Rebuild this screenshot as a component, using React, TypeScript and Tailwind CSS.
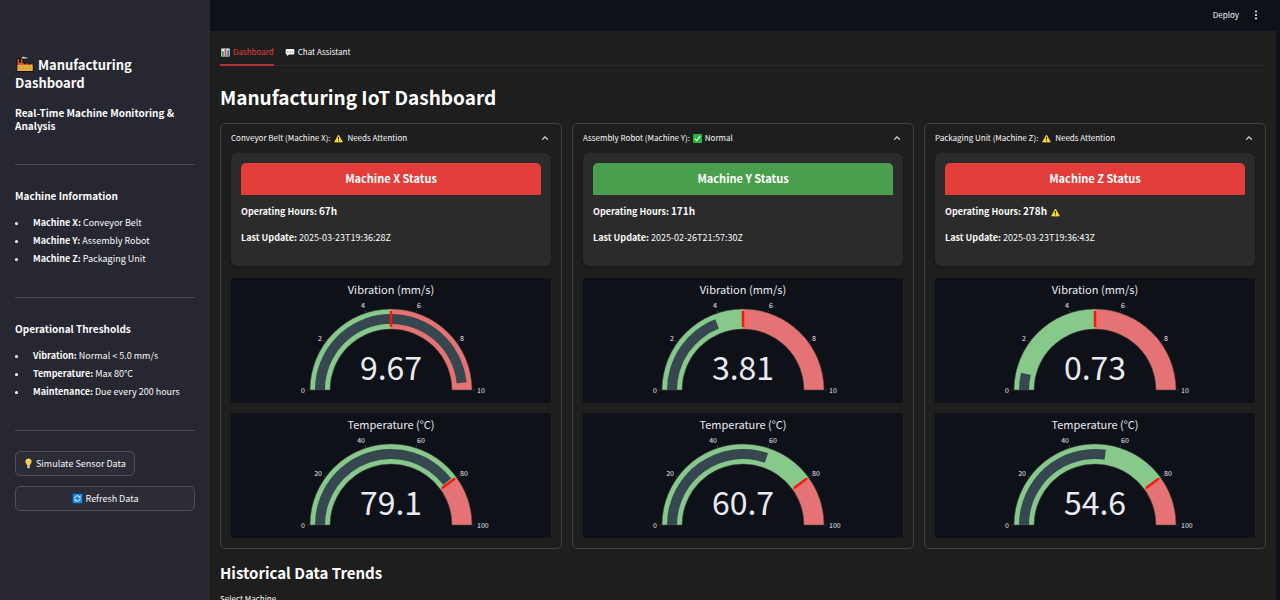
import type { ReactNode } from "react";

type Machine = {
  id: string;
  name: string;
  ok: boolean;
  hours: number;
  maintenanceDue: boolean;
  updated: string;
  vibration: number;
  temperature: number;
};

const machines: Machine[] = [
  { id: "X", name: "Conveyor Belt", ok: false, hours: 67, maintenanceDue: false, updated: "2025-03-23T19:36:28Z", vibration: 9.67, temperature: 79.1 },
  { id: "Y", name: "Assembly Robot", ok: true, hours: 171, maintenanceDue: false, updated: "2025-02-26T21:57:30Z", vibration: 3.81, temperature: 60.7 },
  { id: "Z", name: "Packaging Unit", ok: false, hours: 278, maintenanceDue: true, updated: "2025-03-23T19:36:43Z", vibration: 0.73, temperature: 54.6 },
];

/* ---------- Icons ---------- */

function FactoryIcon() {
  return (
    <svg viewBox="0 0 18 16" className="mx-px inline-block h-4 w-[18px] align-[-2px]" aria-hidden="true">
      <path d="M1 15.5V2.500h2.400v4h1V2.500h2.400v4l3 1.500V5.800l3.400 2.400 3.800-1.900v9.200z" fill="#e8542a" stroke="#111" strokeWidth="1" />
      <path d="M1.500 9h15.200V15H1.500z" fill="#f3a92c" />
      <path d="M3 11h1.800v1.500H3zm3.300 0h1.800v1.500H6.300zm3.300 0h1.800v1.500H9.600zm3.300 0h1.800v1.500h-1.800z" fill="#7fb7a0" />
      <path d="M5.500 1.900C6 .4 8.300.2 9.200 1.100c1.200-.4 2.800.3 2.800 1.700H7.200C6.300 2.900 5.300 2.600 5.500 1.900z" fill="#e6e6e6" stroke="#111" strokeWidth=".6" />
    </svg>
  );
}

function ChartIcon() {
  return (
    <svg viewBox="0 0 9 9" className="h-[9px] w-[9px]" aria-hidden="true">
      <rect x=".3" y=".5" width="8.400" height="8" fill="#e9eef2" />
      <rect x="1" y="3.200" width="1.800" height="5" fill="#2faa4d" />
      <rect x="3.600" y="1.200" width="1.800" height="7" fill="#d9453c" />
      <rect x="6.200" y="2.200" width="1.800" height="6" fill="#2f82c9" />
    </svg>
  );
}

function ChatIcon() {
  return (
    <svg viewBox="0 0 10 9" className="h-[9px] w-[10px]" aria-hidden="true">
      <path d="M1.500 1h7a.8.8 0 0 1 .8.8v4a.8.8 0 0 1-.8.8H4L2.200 8.200V6.600h-.7a.8.8 0 0 1-.8-.8v-4A.8.8 0 0 1 1.500 1z" fill="#f2f2f2" />
      <path d="M2.400 3.500h1v.9h-1zm2.100 0h1v.9h-1zm2.100 0h1v.9h-1z" fill="#777" />
    </svg>
  );
}

function WarningIcon() {
  return (
    <svg viewBox="0 0 9 9" className="mr-1 ml-[2px] inline-block h-[9px] w-[9px] align-[-2px]" role="img" aria-label="Warning">
      <path d="M4.500 1 8.400 8H.6z" fill="#fbdc2e" stroke="#fbdc2e" strokeWidth=".7" strokeLinejoin="round" />
      <path d="M4.500 3v2.600M4.500 6.300v1" stroke="#26220a" strokeWidth="1" />
    </svg>
  );
}

function CheckIcon() {
  return (
    <svg viewBox="0 0 9 9" className="mr-[3px] ml-px inline-block h-[9px] w-[9px] align-[-2px]" role="img" aria-label="OK">
      <rect width="9" height="9" rx=".8" fill="#27b53a" />
      <path d="m2 4.800 1.800 1.900L7.200 2" fill="none" stroke="#fff" strokeWidth="1.100" />
    </svg>
  );
}

function BulbIcon() {
  return (
    <svg viewBox="0 0 9 11" className="h-[11px] w-[9px]" aria-hidden="true">
      <path d="M4.500.6a3.100 3.100 0 0 1 3.100 3.100c0 1.700-1.500 2.200-1.700 4H3.100c-.2-1.800-1.700-2.300-1.700-4A3.100 3.100 0 0 1 4.500.6z" fill="#fbc94b" />
      <path d="M3.500 2.200c.5-.6 1-.8 1.600-.8" stroke="#fff1b8" strokeWidth=".8" fill="none" />
      <path d="M3.200 7.800h2.600v1.400l-.7 1H3.900l-.7-1z" fill="#c9c9c9" />
    </svg>
  );
}

function RefreshIcon() {
  return (
    <svg viewBox="0 0 11 11" className="h-[11px] w-[11px]" aria-hidden="true">
      <rect x=".4" y=".4" width="10.200" height="10.200" rx="1" fill="#1788e0" stroke="#0b3a66" strokeWidth=".8" />
      <path d="M2.800 5.500a2.700 2.700 0 0 1 4.700-1.800M8.200 5.500a2.700 2.700 0 0 1-4.700 1.800" fill="none" stroke="#fff" strokeWidth="1" />
      <path d="M8.500 2.300v2.300H6.200zM2.500 8.700V6.400h2.300z" fill="#fff" />
    </svg>
  );
}

function ChevronUp() {
  return (
    <svg viewBox="0 0 8 6" className="h-[6px] w-2" aria-hidden="true">
      <path d="m1.200 4.600 2.800-2.800 2.800 2.800" fill="none" stroke="#e4e4e4" strokeWidth="1.200" />
    </svg>
  );
}

/* ---------- Gauge ---------- */

const CX = 160;
const CY = 112;

function point(r: number, t: number) {
  const a = Math.PI * (1 - t);
  return `${(CX + r * Math.cos(a)).toFixed(2)} ${(CY - r * Math.sin(a)).toFixed(2)}`;
}

function band(r0: number, r1: number, from: number, to: number) {
  return `M${point(r1, from)}A${r1} ${r1} 0 0 1 ${point(r1, to)}L${point(r0, to)}A${r0} ${r0} 0 0 0 ${point(r0, from)}Z`;
}

const tickSpots: { x: number; y: number; anchor: "start" | "end" }[] = [
  { x: 74, y: 115, anchor: "end" },
  { x: 91, y: 63, anchor: "end" },
  { x: 134, y: 30, anchor: "end" },
  { x: 186, y: 30, anchor: "start" },
  { x: 229, y: 63, anchor: "start" },
  { x: 246, y: 115, anchor: "start" },
];

function Gauge({ title, value, max, limit }: { title: string; value: number; max: number; limit: number }) {
  const t = value / max;
  const l = limit / max;
  return (
    <svg viewBox="0 0 320 125" className="block h-[125px] w-full bg-[#0e1117]" role="img" aria-label={`${title}: ${value}`}>
      <g fill="#e9ebf1" textAnchor="middle">
        <text x={CX} y="16" fontSize="11">{title}</text>
        <text x={CX} y="102" fontSize="32">{value}</text>
      </g>
      <path d={band(61, 81, 0, l)} fill="#86c98a" />
      <path d={band(61, 81, l, 1)} fill="#e57373" />
      <path d={band(66, 76, 0, t)} fill="#37474f" />
      <path d={band(61, 81, 0, 1)} fill="none" stroke="#444" strokeWidth=".5" />
      <path d={`M${point(63, l)}L${point(79, l)}`} stroke="#f5180f" strokeWidth="2.500" />
      {tickSpots.map((s, i) => (
        <g key={i}>
          <path d={`M${point(81.500, i / 5)}L${point(84, i / 5)}`} stroke="#444" strokeWidth=".7" />
          <text x={s.x} y={s.y} textAnchor={s.anchor} fontSize="7" fill="#e9ebf1">
            {(max * i) / 5}
          </text>
        </g>
      ))}
    </svg>
  );
}

/* ---------- Blocks ---------- */

function MachineCard({ m }: { m: Machine }) {
  return (
    <details open className="min-w-0 rounded-[5px] border border-[#414141] px-[10px] pb-[10px]">
      <summary className="mb-[2px] flex h-[27px] cursor-pointer list-none items-center justify-between text-[8px] leading-3">
        <span>
          {m.name} (Machine {m.id}): {m.ok ? <CheckIcon /> : <WarningIcon />}
          {m.ok ? "Normal" : "Needs Attention"}
        </span>
        <span className="pr-[2px]">
          <ChevronUp />
        </span>
      </summary>
      <div className="flex flex-col gap-[10px]">
        <section className="mb-[2px] h-[113px] rounded-[6px] bg-[#2b2b2b] p-[10px] shadow-[0_1px_3px_rgba(0,0,0,0.3)]">
          <h3 className={`rounded-t-[5px] pb-px text-center text-[11px] leading-[31px] font-bold text-white ${m.ok ? "bg-[#4a9f4e]" : "bg-[#e23d39]"}`}>
            Machine {m.id} Status
          </h3>
          <p className="mt-2 text-[9px] leading-4 font-bold">
            Operating Hours: <span className="text-[10px]">{m.hours}h</span> {m.maintenanceDue && <WarningIcon />}
          </p>
          <p className="mt-[10px] text-[9px] leading-4">
            <strong>Last Update:</strong> {m.updated}
          </p>
        </section>
        <Gauge title="Vibration (mm/s)" value={m.vibration} max={10} limit={5} />
        <Gauge title="Temperature (°C)" value={m.temperature} max={100} limit={80} />
      </div>
    </details>
  );
}

function SidebarSection({ title, rows }: { title: string; rows: [string, string][] }) {
  return (
    <section className="border-t border-[#484952] pt-6 pb-[29px]">
      <h2 className="text-[10px] leading-[14px] font-bold">{title}</h2>
      <ul className="mt-[11px] text-[9px] leading-[18px]">
        {rows.map(([k, v]) => (
          <li key={k} className="flex items-center gap-[15px]">
            <span className="size-[3px] rounded-full bg-white" />
            <span>
              <strong>{k}:</strong> {v}
            </span>
          </li>
        ))}
      </ul>
    </section>
  );
}

function SideButton({ wide, children }: { wide?: boolean; children: ReactNode }) {
  return (
    <button
      type="button"
      className={`flex h-[25px] items-center justify-center gap-[3px] rounded-[5px] border border-[#4d4e57] bg-[#2b2c36] px-2 text-[9px] leading-4 ${wide ? "w-full" : "self-start"}`}
    >
      {children}
    </button>
  );
}

export default function App() {
  return (
    <div className="flex h-screen overflow-hidden bg-[#0e1117] font-['Source_Sans_Pro','Noto_Sans_CJK_SC',sans-serif] text-[#fafafa]">
      <aside className="w-[210px] shrink-0 bg-[#262730] px-[15px] pt-14">
        <h1 className="text-[13px] leading-[18px] font-bold">
          <FactoryIcon /> Manufacturing Dashboard
        </h1>
        <p className="mt-[14px] mb-8 text-[10px] leading-[13px] font-bold">Real-Time Machine Monitoring &amp; Analysis</p>
        <SidebarSection
          title="Machine Information"
          rows={[
            ["Machine X", "Conveyor Belt"],
            ["Machine Y", "Assembly Robot"],
            ["Machine Z", "Packaging Unit"],
          ]}
        />
        <SidebarSection
          title="Operational Thresholds"
          rows={[
            ["Vibration", "Normal < 5.0 mm/s"],
            ["Temperature", "Max 80°C"],
            ["Maintenance", "Due every 200 hours"],
          ]}
        />
        <div className="flex flex-col gap-[10px] border-t border-[#484952] pt-5">
          <SideButton>
            <BulbIcon />
            Simulate Sensor Data
          </SideButton>
          <SideButton wide>
            <RefreshIcon />
            Refresh Data
          </SideButton>
        </div>
      </aside>

      <div className="flex min-w-0 flex-1 flex-col pr-1">
        <header className="flex h-[31px] shrink-0 items-center justify-end gap-[14px] pr-[17px] pb-px">
          <button type="button" className="text-[8px] leading-4">
            Deploy
          </button>
          <button type="button" aria-label="Menu">
            <svg viewBox="0 0 6 10" className="h-[10px] w-[6px]" fill="#fafafa" aria-hidden="true">
              <circle cx="3" cy="1.500" r="1" />
              <circle cx="3" cy="5" r="1" />
              <circle cx="3" cy="8.500" r="1" />
            </svg>
          </button>
        </header>

        <main className="min-h-0 flex-1 bg-[#1e1e1e] px-[10px] pt-[9px]">
          <nav className="flex h-[26px] gap-[11px] border-b border-[#2e2e2e] text-[8px] leading-3" role="tablist">
            <button type="button" role="tab" aria-selected="true" className="-mb-px flex h-[26px] items-center gap-[3px] border-b-2 border-[#b83235] pl-px text-[#e0403f]">
              <ChartIcon />
              Dashboard
            </button>
            <button type="button" role="tab" aria-selected="false" className="flex h-6 items-center gap-[3px]">
              <ChatIcon />
              Chat Assistant
            </button>
          </nav>

          <h1 className="mt-[15px] text-[19px] leading-8 font-bold text-white">Manufacturing IoT Dashboard</h1>

          <div className="mt-[10px] grid grid-cols-3 gap-[10px]">
            {machines.map((m) => (
              <MachineCard key={m.id} m={m} />
            ))}
          </div>

          <h2 className="mt-3 text-[15px] leading-6 font-bold text-white">Historical Data Trends</h2>
          <label className="mt-2 block text-[8px] leading-3">
            Select Machine
            <select className="mt-1 block h-6 w-full rounded-[5px] bg-[#262730] px-2">
              {machines.map((m) => (
                <option key={m.id}>Machine {m.id}</option>
              ))}
            </select>
          </label>
        </main>
      </div>
    </div>
  );
}
